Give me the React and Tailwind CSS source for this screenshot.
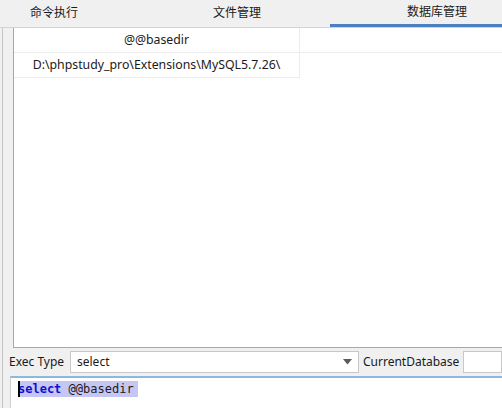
import React from 'react';

const ui = { fontFamily: '"Noto Sans", "Noto Sans CJK SC", sans-serif' };
const cjk = { fontFamily: '"Noto Sans CJK SC", "Noto Sans", sans-serif' };
const mono = { fontFamily: '"DejaVu Sans Mono", "Liberation Mono", monospace' };

const Tabs = () => (
  <div className="flex h-[28px] bg-[#f0f0f0] border-b border-[#d4d4d4] text-[12px] text-[#1a1a1a]" style={cjk}>
    <div className="w-[108px] flex items-center justify-center pb-[4px]">命令执行</div>
    <div className="w-[222px] flex items-center pl-[105px] pb-[4px]">文件管理</div>
    <div className="flex-1 flex items-center pl-[77px] pb-[2px] border-b-[3px] border-[#4a7fc1]">数据库管理</div>
  </div>
);

const ResultTable = () => (
  <div className="flex-1 bg-white border-l border-b border-[#a8a8a8] text-[12.3px] text-[#1a1a1a]" style={ui}>
    <div className="flex h-[25px] border-b border-[#ececec]">
      <div className="w-[286px] flex items-center justify-center border-r border-[#ececec]">@@basedir</div>
      <div className="flex-1" />
    </div>
    <div className="flex h-[25px]">
      <div className="w-[286px] flex items-center justify-center border-r border-b border-[#ececec]">
        D:\phpstudy_pro\Extensions\MySQL5.7.26\
      </div>
      <div className="flex-1" />
    </div>
  </div>
);

const App = () => (
  <div className="w-[502px] h-[408px] bg-[#f0f0f0] flex flex-col overflow-hidden">
    <Tabs />
    <div className="flex flex-1 min-h-0">
      <div className="w-[13px] pl-[2px]">
        <div className="w-px h-full bg-[#c4c4c4]" />
      </div>
      <div className="flex-1 flex flex-col min-w-0">
        <ResultTable />
      </div>
    </div>
    <div className="flex h-[60px] shrink-0 flex-col">
      <div className="flex items-center h-[28px] text-[12px] text-[#1a1a1a]" style={ui}>
        <div className="w-[2px] self-stretch ml-[2px] mr-[5px] border-l border-[#c4c4c4]" />
        <span className="w-[61px]">Exec Type</span>
        <div className="w-[289px] h-[22px] bg-white border border-[#c8c8c8] flex items-center pl-[6px] pr-[6px]">
          <span className="flex-1">select</span>
          <svg width="9" height="6" viewBox="0 0 9 6"><path d="M0 0h9L4.5 5.5z" fill="#5a5a5a" /></svg>
        </div>
        <span className="ml-[4px] w-[100px]">CurrentDatabase</span>
        <div className="flex-1 h-[22px] bg-white border border-[#c8c8c8]" />
      </div>
      <div className="flex flex-1">
        <div className="w-[10px] pl-[2px]">
          <div className="w-px h-full bg-[#c4c4c4]" />
        </div>
        <div className="flex-1 bg-white border-t-2 border-l border-t-[#8fb8e0] border-l-[#d0d0d0] pt-[3px] pl-[7px]">
          <div className="relative flex items-center h-[16px] text-[12px]" style={mono}>
            <span className="bg-[#c6c6f5] h-[16px] leading-[16px] pr-[4px]">
              <span className="text-[#1010d0] font-bold">select</span>
              <span className="text-[#202020]"> @@basedir</span>
            </span>
            <span className="absolute left-0 top-0 w-[2px] h-[16px] bg-black" />
          </div>
        </div>
      </div>
    </div>
  </div>
);

export default App;
